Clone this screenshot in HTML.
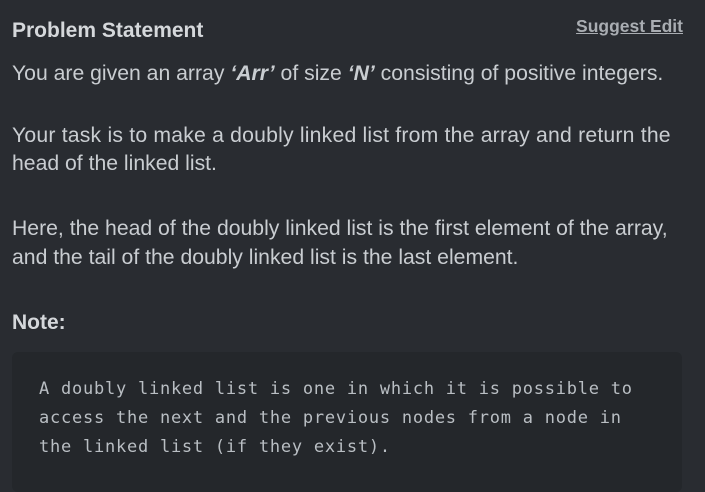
<!DOCTYPE html>
<html><head><style>
body{margin:0;width:705px;height:481px;background:#292c31;overflow:hidden;font-family:"Liberation Sans",sans-serif;color:#c9cdd1;position:relative}
.l{position:absolute;left:12px;font-size:21.2px;line-height:29px;white-space:nowrap}
.t{font-weight:bold;color:#d5d8db;font-size:21px}
.se{position:absolute;right:22px;top:16px;font-size:17.5px;font-weight:bold;color:#a9adb2;text-decoration:underline}
.code{position:absolute;left:12px;top:352px;width:670px;height:140px;background:#24272b;border-radius:6px}
.c{position:absolute;left:39px;font-family:"DejaVu Sans Mono","Liberation Mono",monospace;font-size:17px;letter-spacing:0.76px;color:#b9bec3;line-height:29px;white-space:nowrap}
</style></head><body>
<div class="l t" style="top:16px">Problem Statement</div>
<div class="se">Suggest Edit</div>
<div class="l" style="top:59px">You are given an array <b><i>‘Arr’</i></b> of size <b><i>‘N’</i></b> consisting of positive integers.</div>
<div class="l" style="top:121px;letter-spacing:0.2px">Your task is to make a doubly linked list from the array and return the</div>
<div class="l" style="top:149px">head of the linked list.</div>
<div class="l" style="top:214px">Here, the head of the doubly linked list is the first element of the array,</div>
<div class="l" style="top:243px">and the tail of the doubly linked list is the last element.</div>
<div class="l t" style="top:308px">Note:</div>
<div class="code"></div>
<div class="c" style="top:375px">A doubly linked list is one in which it is possible to</div>
<div class="c" style="top:404px">access the next and the previous nodes from a node in</div>
<div class="c" style="top:433px">the linked list (if they exist).</div>
</body></html>
